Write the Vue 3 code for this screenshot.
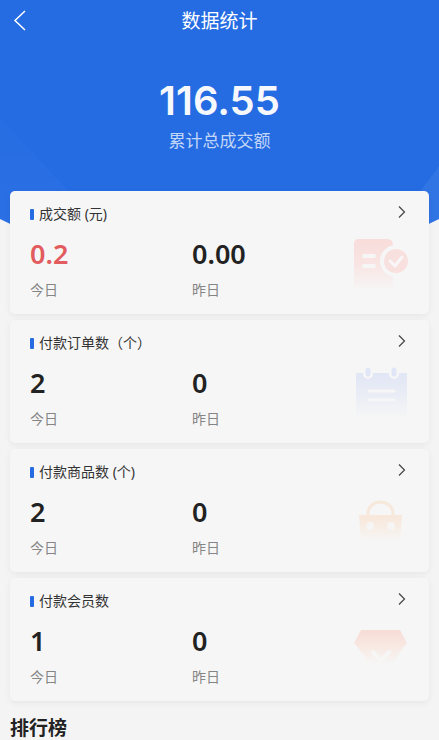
<script setup>
const cards = [
  { title: '成交额 (元)', today: '0.2', yesterday: '0.00', icon: 'bill', hot: true },
  { title: '付款订单数（个）', today: '2', yesterday: '0', icon: 'order' },
  { title: '付款商品数 (个)', today: '2', yesterday: '0', icon: 'bag' },
  { title: '付款会员数', today: '1', yesterday: '0', icon: 'gem' },
]
</script>

<template>
  <div class="page">
    <header class="hero">
      <svg class="backdrop" viewBox="0 0 439 238" preserveAspectRatio="none" aria-hidden="true">
        <defs>
          <clipPath id="heroClip"><path d="M0 0H439V219Q220 330 0 219Z" /></clipPath>
          <linearGradient id="leftGlow" x1="0" y1="0" x2="0" y2="1">
            <stop offset="0" stop-color="#fff" stop-opacity=".01" /><stop offset="1" stop-color="#fff" stop-opacity=".03" />
          </linearGradient>
        </defs>
        <g clip-path="url(#heroClip)">
          <rect width="439" height="238" fill="#256ce3" />
          <path d="M0 118L86 210V238H0Z" fill="url(#leftGlow)" />
          <path d="M439 166L405 212V238H439Z" fill="#fff" fill-opacity=".06" />
        </g>
      </svg>
      <div class="bar">
        <button class="back" type="button" aria-label="返回">
          <svg width="14" height="22" viewBox="0 0 14 22"><path d="M12 2L2 11.500L12 21" fill="none" stroke="#fff" stroke-width="1.500" /></svg>
        </button>
        <h1>数据统计</h1>
      </div>
      <div class="total">116.55</div>
      <div class="caption">累计总成交额</div>
    </header>

    <main class="list">
      <section v-for="card in cards" :key="card.icon" class="card">
        <div class="head">
          <h2>{{ card.title }}</h2>
          <button class="more" type="button" :aria-label="card.title">
            <svg width="8" height="14" viewBox="0 0 8 14"><path d="M1 1.500L6.500 7L1 12.500" fill="none" stroke="#444" stroke-width="1.200" /></svg>
          </button>
        </div>
        <div class="body">
          <div class="stat">
            <strong :class="{ hot: card.hot }">{{ card.today }}</strong>
            <span>今日</span>
          </div>
          <div class="stat">
            <strong>{{ card.yesterday }}</strong>
            <span>昨日</span>
          </div>
          <svg v-if="card.icon === 'bill'" class="art" viewBox="0 0 60 60" aria-hidden="true">
            <defs>
              <linearGradient id="billFade" x1="0" y1="0" x2="0" y2="1">
                <stop offset="0" stop-color="#f8dcda" /><stop offset=".5" stop-color="#f8e5e3" /><stop offset="1" stop-color="#f6f6f6" />
              </linearGradient>
            </defs>
            <path d="M8 3H36Q42 3 42 9V54H3V8Q3 3 8 3Z" fill="url(#billFade)" />
            <path d="M13 20H23M13 30H23" stroke="#f7f6f6" stroke-width="4" stroke-linecap="round" />
            <circle cx="45" cy="25" r="16" fill="#f6f6f6" />
            <circle cx="45" cy="25" r="12" fill="#f8e0de" />
            <path d="M39 25L44 30L51 21" fill="none" stroke="#f8f6f6" stroke-width="3" stroke-linecap="round" stroke-linejoin="round" />
          </svg>
          <svg v-else-if="card.icon === 'order'" class="art" viewBox="0 0 60 60" aria-hidden="true">
            <defs>
              <linearGradient id="orderFade" x1="0" y1="0" x2="0" y2="1">
                <stop offset="0" stop-color="#e1e6f5" /><stop offset=".5" stop-color="#eaedf5" /><stop offset="1" stop-color="#f6f6f6" />
              </linearGradient>
            </defs>
            <path d="M5 8H56V53H5Z" fill="url(#orderFade)" />
            <path d="M17 6V9M43 6V9" stroke="#f6f6f6" stroke-width="10" stroke-linecap="round" />
            <path d="M17 5V9M43 5V9" stroke="#e0e6f5" stroke-width="5" stroke-linecap="round" />
            <path d="M18 26H43M18 35H43" stroke="#f6f6f7" stroke-width="3" stroke-linecap="round" />
          </svg>
          <svg v-else-if="card.icon === 'bag'" class="art" viewBox="0 0 60 60" aria-hidden="true">
            <defs>
              <linearGradient id="bagFade" x1="0" y1="0" x2="0" y2="1">
                <stop offset="0" stop-color="#f8e7da" /><stop offset=".4" stop-color="#f7ece3" /><stop offset="1" stop-color="#f6f6f6" />
              </linearGradient>
            </defs>
            <path d="M17 22V20C17 4 42 4 42 20V22" fill="none" stroke="#f7e8dc" stroke-width="3" />
            <path d="M8 21H51L49 47H10Z" fill="url(#bagFade)" />
            <circle cx="19" cy="32" r="4" fill="#f6f5f3" />
            <circle cx="40" cy="32" r="4" fill="#f6f5f3" />
          </svg>
          <svg v-else class="art" viewBox="0 0 60 60" aria-hidden="true">
            <defs>
              <linearGradient id="gemFade" x1="0" y1="0" x2="0" y2="1">
                <stop offset="0" stop-color="#f7dcd7" /><stop offset=".5" stop-color="#f8e9e3" /><stop offset="1" stop-color="#f6f6f6" />
              </linearGradient>
            </defs>
            <path d="M10 7H49L56 20L48 30L42 41H19L11 30L3 20Z" fill="url(#gemFade)" />
            <path d="M22 29L30 38L38 29" fill="none" stroke="#f7f6f6" stroke-width="4" stroke-linecap="round" stroke-linejoin="round" />
          </svg>
        </div>
      </section>
    </main>

    <h2 class="rank">排行榜</h2>
  </div>
</template>

<style>
body {
  margin: 0;
  background: #f4f4f4;
}
</style>

<style scoped>
.page {
  font-family: 'Noto Sans', 'Noto Sans CJK SC', sans-serif;
  color: #222;
}
h1,
h2 {
  margin: 0;
  font-weight: 400;
}
button {
  padding: 0;
  border: 0;
  background: none;
  cursor: pointer;
}
button svg {
  display: block;
}
.hero {
  position: relative;
  height: 191px;
  color: #fff;
  text-align: center;
}
.backdrop {
  position: absolute;
  inset: 0;
  z-index: -1;
  width: 100%;
  height: 238px;
}
.bar {
  display: grid;
  grid-template-columns: 40px 1fr 40px;
  align-items: center;
  height: 42px;
}
.back {
  justify-self: start;
  margin: 0 0 2px 13px;
}
h1 {
  font-size: 19px;
  line-height: 28px;
}
.total {
  padding-top: 35px;
  font-family: Inter, sans-serif;
  font-size: 40px;
  font-weight: 600;
  line-height: 48px;
  color: #f6f8fc;
}
.caption {
  padding-top: 4px;
  font-size: 17px;
  line-height: 24px;
  color: #c2d6f7;
}
.list {
  display: grid;
  gap: 6px;
  padding: 0 10px;
}
.card {
  padding: 12px 20px 13px;
  border-radius: 5px;
  background: #f6f6f6;
  box-shadow: 0 2px 6px rgba(0, 0, 0, 0.06);
}
.head {
  display: flex;
  align-items: center;
  justify-content: space-between;
  height: 22px;
}
.head h2 {
  display: flex;
  align-items: center;
  gap: 5px;
  font-size: 14px;
  line-height: 22px;
  color: #333;
}
.head h2::before {
  content: '';
  width: 4px;
  height: 11px;
  border-radius: 1px;
  background: #256ce3;
}
.more {
  align-self: flex-start;
  margin: 2px 3px 0 0;
}
.body {
  display: grid;
  grid-template-columns: 162px 1fr 58px;
  height: 76px;
}
.stat {
  display: flex;
  flex-direction: column;
  gap: 8px;
  padding-top: 12px;
}
.stat strong {
  font-size: 27px;
  font-weight: 600;
  line-height: 34px;
}
.stat .hot {
  color: #e25b5e;
}
.stat span {
  font-size: 14px;
  line-height: 22px;
  color: #858585;
}
.art {
  width: 60px;
  height: 60px;
  margin-top: 11px;
}
.rank {
  padding: 16px 10px 0;
  font-size: 19px;
  font-weight: 700;
  line-height: 22px;
}
</style>
